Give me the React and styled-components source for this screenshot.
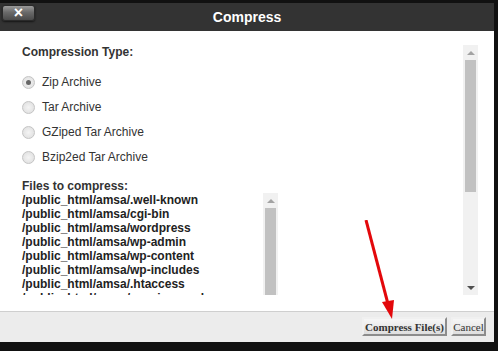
import styled, { createGlobalStyle } from "styled-components";

const GlobalStyle = createGlobalStyle`
  html, body {
    margin: 0;
    padding: 0;
    background: #111;
  }
  body {
    font-family: "Liberation Sans", Arial, sans-serif;
  }
`;

const types = [
  { label: "Zip Archive", checked: true },
  { label: "Tar Archive" },
  { label: "GZiped Tar Archive" },
  { label: "Bzip2ed Tar Archive" },
];

const files = [
  "/public_html/amsa/.well-known",
  "/public_html/amsa/cgi-bin",
  "/public_html/amsa/wordpress",
  "/public_html/amsa/wp-admin",
  "/public_html/amsa/wp-content",
  "/public_html/amsa/wp-includes",
  "/public_html/amsa/.htaccess",
  "/public_html/amsa/wp-signup.php",
];

function Scrollbar({ thumbHeight, showDown = true }) {
  return (
    <Track>
      <ArrowBox>
        <Arrow $up />
      </ArrowBox>
      <Thumb style={{ height: thumbHeight }} />
      <Spacer />
      {showDown && (
        <ArrowBox>
          <Arrow />
        </ArrowBox>
      )}
    </Track>
  );
}

export default function App() {
  return (
    <>
      <GlobalStyle />
      <Dialog>
        <Header>
          <CloseButton type="button">×</CloseButton>
          <Title>Compress</Title>
        </Header>

        <Body>
          <Pane>
            <PaneContent>
              <SectionTitle>Compression Type:</SectionTitle>
              <RadioList>
                {types.map((t) => (
                  <RadioRow key={t.label}>
                    <Radio $checked={t.checked} />
                    <RadioLabel>{t.label}</RadioLabel>
                  </RadioRow>
                ))}
              </RadioList>

              <FilesTitle>Files to compress:</FilesTitle>
              <FileBox>
                <FileLines>
                  {files.map((f) => (
                    <FileLine key={f}>{f}</FileLine>
                  ))}
                </FileLines>
                <Scrollbar thumbHeight={110} showDown={false} />
              </FileBox>
            </PaneContent>
            <Scrollbar thumbHeight={132} />
          </Pane>
        </Body>

        <Footer>
          <Button type="button" $primary>
            Compress File(s)
          </Button>
          <Button type="button">Cancel</Button>
        </Footer>

        <Annotation width="40" height="110" viewBox="0 0 40 110">
          <line x1="6" y1="0" x2="28" y2="84" stroke="#e3080b" strokeWidth="3" />
          <polygon points="22,82 34,80 32,99" fill="#e3080b" />
        </Annotation>
      </Dialog>
    </>
  );
}

const Dialog = styled.div`
  position: relative;
  width: 494px;
  height: 342px;
  padding-top: 3px;
  box-sizing: border-box;
  display: flex;
  flex-direction: column;
`;

const Header = styled.div`
  height: 28px;
  background: #333;
  display: flex;
  align-items: center;
  position: relative;
`;

const CloseButton = styled.button`
  position: absolute;
  left: 2px;
  top: 2px;
  width: 33px;
  height: 16px;
  padding: 0;
  border: 1px solid #2a2a2a;
  border-radius: 3px;
  background: linear-gradient(#9a9a9a, #6a6a6a 45%, #4a4a4a);
  box-shadow: 0 1px 2px rgba(0, 0, 0, 0.6);
  color: #fff;
  font-family: "Liberation Sans", Arial, sans-serif;
  font-weight: bold;
  font-size: 16px;
  line-height: 12px;
`;

const Title = styled.div`
  flex: 1;
  text-align: center;
  color: #fff;
  font-weight: bold;
  font-size: 14px;
`;

const Body = styled.div`
  height: 280px;
  background: #fff;
  padding: 14px 16px 16px 16px;
  box-sizing: border-box;
`;

const Pane = styled.div`
  height: 250px;
  display: flex;
`;

const PaneContent = styled.div`
  flex: 1;
  overflow: hidden;
  padding-left: 6px;
`;

const SectionTitle = styled.div`
  font-size: 12px;
  font-weight: bold;
  color: #333;
  line-height: 14px;
`;

const RadioList = styled.div`
  margin-top: 14px;
  display: flex;
  flex-direction: column;
  gap: 7px;
`;

const RadioRow = styled.div`
  height: 18px;
  display: flex;
  align-items: center;
  gap: 7px;
`;

const Radio = styled.span`
  width: 11px;
  height: 11px;
  border-radius: 50%;
  border: 1px solid #c4c4c4;
  background: radial-gradient(circle, #f4f4f4, #dcdcdc);
  position: relative;

  &::after {
    content: "";
    display: ${(p) => (p.$checked ? "block" : "none")};
    position: absolute;
    left: 3px;
    top: 3px;
    width: 5px;
    height: 5px;
    border-radius: 50%;
    background: #666;
  }
`;

const RadioLabel = styled.span`
  font-size: 12px;
  color: #333;
`;

const FilesTitle = styled(SectionTitle)`
  margin-top: 13px;
`;

const FileBox = styled.div`
  width: 256px;
  height: 120px;
  display: flex;
`;

const FileLines = styled.div`
  flex: 1;
`;

const FileLine = styled.div`
  font-size: 12px;
  font-weight: bold;
  color: #222;
  line-height: 14px;
  white-space: nowrap;
`;

const Track = styled.div`
  width: 15px;
  background: #f1f1f1;
  display: flex;
  flex-direction: column;
  align-items: center;
`;

const ArrowBox = styled.div`
  height: 15px;
  width: 15px;
  display: flex;
  align-items: center;
  justify-content: center;
  flex-shrink: 0;
`;

const Arrow = styled.span`
  width: 0;
  height: 0;
  border-left: 4px solid transparent;
  border-right: 4px solid transparent;
  ${(p) =>
    p.$up ? "border-bottom: 4px solid #a3a3a3;" : "border-top: 4px solid #505050;"}
`;

const Thumb = styled.div`
  width: 11px;
  background: #c1c1c1;
  flex-shrink: 0;
`;

const Spacer = styled.div`
  flex: 1;
`;

const Footer = styled.div`
  flex: 1;
  background: #ececec;
  border-top: 1px solid #cfcfcf;
  display: flex;
  justify-content: flex-end;
  align-items: flex-start;
  gap: 4px;
  padding: 5px 8px 0 0;
`;

const Button = styled.button`
  width: ${(p) => (p.$primary ? "85px" : "35px")};
  height: 19px;
  padding: 0;
  font-family: "Liberation Serif", "Times New Roman", serif;
  font-size: 11px;
  font-weight: ${(p) => (p.$primary ? "bold" : "normal")};
  color: #333;
  background: linear-gradient(#f6f6f6, #dedede);
  border: 2px solid;
  border-color: #f0f0f0 #8c8c8c #8c8c8c #f0f0f0;
`;

const Annotation = styled.svg`
  position: absolute;
  left: 360px;
  top: 220px;
  pointer-events: none;
`;
